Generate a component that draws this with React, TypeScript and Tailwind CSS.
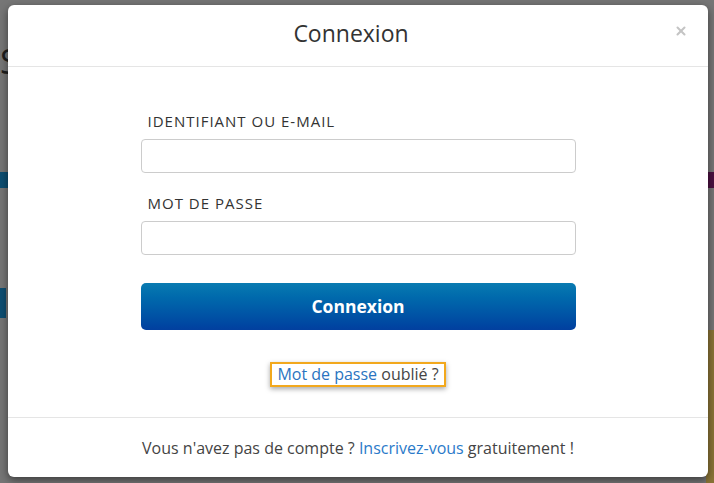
import { X } from "lucide-react";

const App = () => {
  return (
    <div
      className="relative h-[483px] w-[714px] overflow-hidden bg-[#767676] pl-[8px] pt-[5px]"
      style={{ fontFamily: '"Open Sans", "Liberation Sans", sans-serif' }}
    >
      {/* dimmed page behind the overlay */}
      <div className="absolute left-0 top-[44px] text-[34px] leading-none text-[#1e1e1e]">S</div>
      <div className="absolute left-0 top-[172px] h-[16px] w-[10px] bg-[#0d4e72]" />
      <div className="absolute left-0 top-[288px] h-[30px] w-[6px] bg-[#0d4e72]" />
      <div className="absolute right-0 top-[172px] h-[16px] w-[8px] bg-[#4a1040]" />
      <div className="absolute right-0 top-[330px] h-[153px] w-[8px] bg-[#8a7436]" />

      <div className="relative flex h-[472px] w-[700px] flex-col rounded-[6px] bg-white shadow-[0_3px_9px_rgba(0,0,0,0.5)]">
        <div className="relative flex h-[62px] items-center justify-center border-b border-[#e5e5e5]">
          <h2 className="-mt-[4px] pr-[14px] text-[23px] leading-none text-[#333]">Connexion</h2>
          <button className="absolute right-[20px] top-[19px] text-[#c4c4c4]">
            <X size={14} strokeWidth={3.5} />
          </button>
        </div>

        <div className="flex flex-1 flex-col items-center pt-[44px]">
          <div className="flex w-[435px] flex-col">
            <label className="pl-[7px] text-[15px] leading-[20px] tracking-[1px] text-[#333]">IDENTIFIANT OU E-MAIL</label>
            <input className="mt-[8px] h-[34px] w-full rounded-[4px] border border-[#ccc] bg-white" />
            <label className="mt-[20px] pl-[7px] text-[15px] leading-[20px] tracking-[1px] text-[#333]">MOT DE PASSE</label>
            <input type="password" className="mt-[8px] h-[34px] w-full rounded-[4px] border border-[#ccc] bg-white" />
            <button className="mt-[28px] flex h-[47px] w-full items-center justify-center rounded-[5px] bg-gradient-to-b from-[#0a7bb1] to-[#023f9f] text-[17.5px] font-bold text-white">
              Connexion
            </button>
          </div>
          <div className="mt-[32px] border-2 border-[#f2a81d] px-[5px] py-0 text-[16px] leading-[21px] shadow-[0_2px_5px_rgba(0,0,0,0.35)]">
            <a className="text-[#2a74c0]">Mot de passe</a> <span className="text-[#444]">oublié ?</span>
          </div>
        </div>

        <div className="flex h-[60px] items-center justify-center border-t border-[#e5e5e5] text-[16px] text-[#444]">
          <span>
            Vous n'avez pas de compte ? <a className="text-[#2a7ac9]">Inscrivez-vous</a> gratuitement !
          </span>
        </div>
      </div>
    </div>
  );
};

export default App;
